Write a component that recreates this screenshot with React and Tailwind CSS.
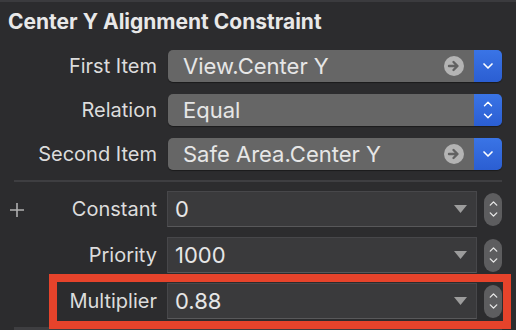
import { ChevronDown, ChevronUp } from 'lucide-react';

const font = { fontFamily: 'Inter, "Noto Sans", sans-serif' };

function ArrowCircle() {
  return (
    <svg width="20" height="20" viewBox="0 0 20 20" className="shrink-0">
      <circle cx="10" cy="10" r="10" fill="#b4b4b4" />
      <path d="M5 10h8M9.5 6l4 4-4 4" stroke="#626262" strokeWidth="2.4" fill="none" strokeLinecap="round" strokeLinejoin="round" />
    </svg>
  );
}

function Popup({ value, arrow, spin }) {
  return (
    <div className="flex h-8 w-[334px] rounded-[5px] overflow-hidden shadow-[0_1px_1px_rgba(0,0,0,0.4)]">
      <div className="flex flex-1 items-center bg-[#666666] pl-[15px] pr-[10px]">
        <span className="flex-1 text-[22px] leading-none text-[#e6e6e6]">{value}</span>
        {arrow && <ArrowCircle />}
      </div>
      <div className="flex w-[28px] flex-col items-center justify-center bg-gradient-to-b from-[#3a74e6] to-[#2b5ed2] text-white">
        {spin ? (
          <>
            <ChevronUp size={14} strokeWidth={2.5} className="-mb-[1px]" />
            <ChevronDown size={14} strokeWidth={2.5} className="-mt-[1px]" />
          </>
        ) : (
          <ChevronDown size={16} strokeWidth={2.5} />
        )}
      </div>
    </div>
  );
}

function Field({ value }) {
  return (
    <div className="flex items-center gap-[7px]">
      <div className="flex h-9 w-[310px] items-center border border-[#47474a] border-b-[#58585a] bg-[#3a3a3c] pl-[7px] pr-[9px]">
        <span className="flex-1 text-[22px] leading-none text-[#e6e6e6]">{value}</span>
        <svg width="13" height="8" viewBox="0 0 13 8">
          <path d="M0 0h13L6.5 8z" fill="#9c9c9c" />
        </svg>
      </div>
      <div className="flex h-[33px] w-[18px] flex-col items-center justify-center rounded-full bg-[#5d5d5f] text-[#e8e8e8]">
        <ChevronUp size={13} strokeWidth={2.5} className="-mb-[1px]" />
        <ChevronDown size={13} strokeWidth={2.5} className="-mt-[1px]" />
      </div>
    </div>
  );
}

function Label({ children }) {
  return <div className="w-[157px] shrink-0 text-right text-[20px] leading-none text-[#dcdcdc]">{children}</div>;
}

export default function App() {
  return (
    <div className="relative h-[330px] w-[516px] overflow-hidden border-t-2 border-[#3b3b3e] bg-[#2c2c2e]" style={font}>
      <h1 className="pl-2 pt-[9px] text-[21px] font-bold leading-[22px] text-[#e8e8e8]">
        Center Y Alignment Constraint
      </h1>

      <div className="mt-[17px] flex flex-col gap-3">
        <div className="flex items-center gap-[11px]">
          <Label>First Item</Label>
          <Popup value="View.Center Y" arrow />
        </div>
        <div className="flex items-center gap-[11px]">
          <Label>Relation</Label>
          <Popup value="Equal" spin />
        </div>
        <div className="flex items-center gap-[11px]">
          <Label>Second Item</Label>
          <Popup value="Safe Area.Center Y" arrow />
        </div>
      </div>

      <div className="ml-[14px] mt-[10px] h-[2px] w-[488px] bg-[#3e3e41]" />

      <div className="mt-[9px] flex flex-col gap-[10px]">
        <div className="flex items-center gap-[10px]">
          <div className="relative">
            <Label>Constant</Label>
            <svg width="14" height="14" viewBox="0 0 14 14" className="absolute left-[10px] top-[4px]">
              <path d="M7 0v14M0 7h14" stroke="#b0b0b0" strokeWidth="1.6" />
            </svg>
          </div>
          <Field value="0" />
        </div>
        <div className="flex items-center gap-[10px]">
          <Label>Priority</Label>
          <Field value="1000" />
        </div>
        <div className="flex items-center gap-[10px]">
          <Label>Multiplier</Label>
          <Field value="0.88" />
        </div>
      </div>

      <div className="absolute bottom-0 left-[14px] h-[3px] w-[488px] bg-[#3e3e41]" />
      <div className="pointer-events-none absolute left-[49px] top-[272px] h-[55px] w-[462px] border-[8px] border-[#e6432b]" />
    </div>
  );
}
